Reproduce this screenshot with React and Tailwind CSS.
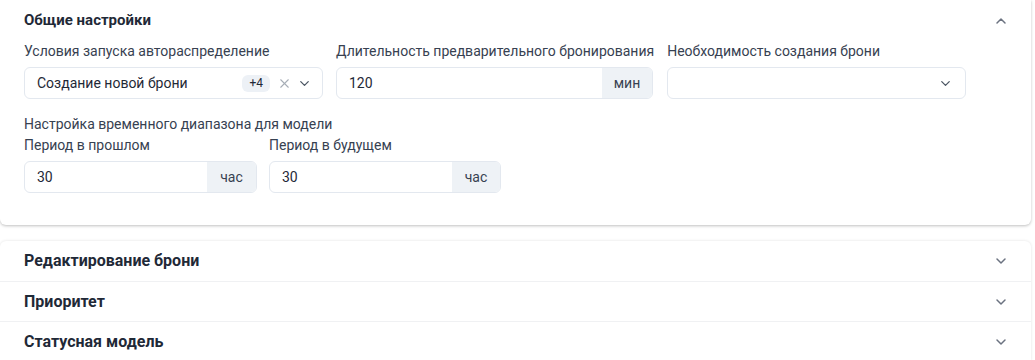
import { ChevronDown, ChevronUp, X } from "lucide-react";

function Label({ children }) {
  return <div className="text-[14px] leading-[20px] text-[#374151] mb-[6px] whitespace-nowrap">{children}</div>;
}

function SuffixInput({ value, suffix, width, suffixWidth }) {
  return (
    <div className={`flex h-[32px] rounded-[6px] border border-[#e3e8ef] overflow-hidden ${width}`}>
      <div className="flex-1 flex items-center pl-[12px] text-[14px] text-[#1f2937]">{value}</div>
      <div className={`flex items-center justify-center bg-[#eef2f6] text-[14px] text-[#374151] ${suffixWidth}`}>
        {suffix}
      </div>
    </div>
  );
}

function Collapsed({ title, first }) {
  return (
    <div className={`flex items-center justify-between h-[40px] pl-[24px] pr-[22px] ${first ? "" : "border-t border-[#f0f1f3]"}`}>
      <div className="text-[16px] font-bold text-[#1f2937]">{title}</div>
      <ChevronDown size={16} strokeWidth={2.25} className="text-[#6b7280]" />
    </div>
  );
}

export default function App() {
  return (
    <div className="min-h-screen bg-white pr-[4px] font-['Roboto',sans-serif]">
      {/* General settings */}
      <div className="bg-white rounded-b-[6px] shadow-[0_1px_3px_rgba(0,0,0,0.25)] pb-[32px]">
        <div className="flex items-center justify-between h-[41px] pl-[24px] pr-[22px]">
          <div className="text-[15px] font-bold text-[#1f2937]">Общие настройки</div>
          <ChevronUp size={16} strokeWidth={2.25} className="text-[#6b7280]" />
        </div>

        <div className="flex gap-[13px] px-[24px]">
          <div>
            <Label>Условия запуска автораспределение</Label>
            <div className="flex items-center w-[299px] h-[32px] rounded-[6px] border border-[#e3e8ef] pl-[12px] pr-[10px]">
              <div className="flex-1 text-[14px] text-[#1f2937]">Создание новой брони</div>
              <div className="h-[17px] px-[7px] rounded-[6px] bg-[#edf1f6] text-[12px] leading-[17px] text-[#1f2937]">+4</div>
              <X size={15} strokeWidth={1.75} className="text-[#a7adb6] ml-[7px]" />
              <ChevronDown size={15} strokeWidth={2} className="text-[#4b5563] ml-[5px]" />
            </div>
          </div>
          <div>
            <Label>Длительность предварительного бронирования</Label>
            <SuffixInput value="120" suffix="мин" width="w-[317px]" suffixWidth="w-[50px]" />
          </div>
          <div>
            <Label>Необходимость создания брони</Label>
            <div className="flex items-center justify-end w-[299px] h-[32px] rounded-[6px] border border-[#e3e8ef] pr-[12px]">
              <ChevronDown size={15} strokeWidth={2} className="text-[#4b5563]" />
            </div>
          </div>
        </div>

        <div className="px-[24px] mt-[15px]">
          <div className="text-[14px] leading-[20px] text-[#374151]">Настройка временного диапазона для модели</div>
          <div className="flex gap-[12px] mt-[1px]">
            <div>
              <Label>Период в прошлом</Label>
              <SuffixInput value="30" suffix="час" width="w-[233px]" suffixWidth="w-[49px]" />
            </div>
            <div>
              <Label>Период в будущем</Label>
              <SuffixInput value="30" suffix="час" width="w-[232px]" suffixWidth="w-[48px]" />
            </div>
          </div>
        </div>
      </div>

      {/* Collapsed sections */}
      <div className="mt-[16px] bg-white rounded-t-[6px] shadow-[0_0_3px_rgba(0,0,0,0.12)]">
        <Collapsed title="Редактирование брони" first />
        <Collapsed title="Приоритет" />
        <Collapsed title="Статусная модель" />
      </div>
    </div>
  );
}
